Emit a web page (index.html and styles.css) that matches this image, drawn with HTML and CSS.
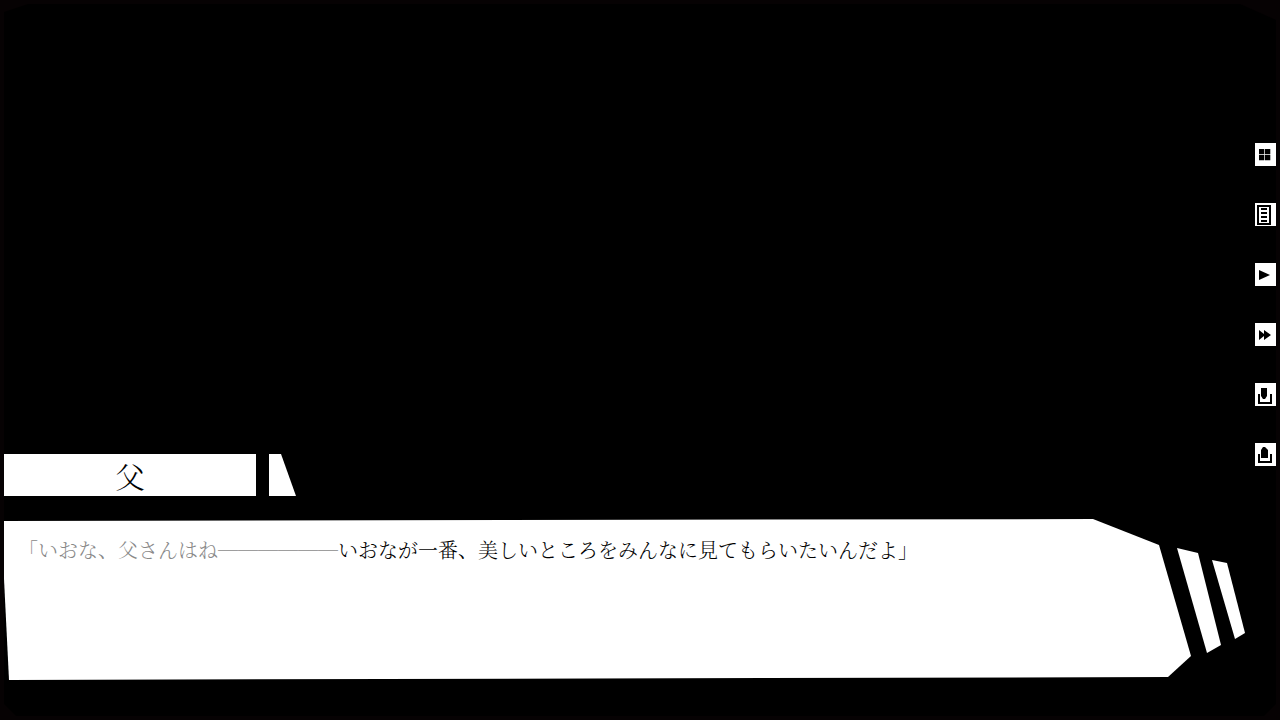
FILE: index.html
```
<!DOCTYPE html>
<html lang="ja">
<head>
    <meta charset="UTF-8">
    <meta name="viewport" content="width=device-width, initial-scale=1.0">
    <title>父</title>
    <link rel="stylesheet" href="styles.css">
</head>
<body>

    <div class="frame">
        <div class="screen">
            <main class="stage">
                <div class="speaker">
                    <h1 class="speaker-name">父</h1>
                    <div class="speaker-tab"></div>
                </div>

                <div class="dialog">
                    <div class="dialog-panel">
                        <p class="dialog-text"><span class="faded">「いおな、父さんはね──────</span>いおなが一番、美しいところをみんなに見てもらいたいんだよ」</p>
                    </div>
                    <svg class="dialog-stripes" viewBox="0 0 68 161" aria-hidden="true">
                        <polygon points="0,29 21,34 44,126 30,134"/>
                        <polygon points="35,41 50,44 68,114 58,120"/>
                    </svg>
                </div>
            </main>

            <nav class="menu">
                <button type="button" aria-label="メニュー">
                    <svg viewBox="0 0 21 23"><path d="M4 6h5.3v5.300H4zM10 6h5.300v5.300H10zM4 12h5.300v5.300H4zM10 12h5.300v5.300H10z"/></svg>
                </button>
                <button type="button" aria-label="ログ">
                    <svg viewBox="0 0 21 23"><path fill-rule="evenodd" d="M2 2h14v20H2zM4 4v16h10V4z"/><path d="M6 5h6v2H6zM6 9h6v2H6zM6 13h6v2H6zM6 17h6v2H6z"/></svg>
                </button>
                <button type="button" aria-label="オート">
                    <svg viewBox="0 0 21 23"><path d="M4 7l11 5-11 5z"/></svg>
                </button>
                <button type="button" aria-label="スキップ">
                    <svg viewBox="0 0 21 23"><path d="M4 7l5 4V7l7 5-7 5v-4l-5 4z"/></svg>
                </button>
                <button type="button" aria-label="セーブ">
                    <svg viewBox="0 0 21 23"><path d="M6 5h6v8l-2 3H8l-2-3z"/><path d="M3 11h2v8h10v-8h2v10H3z"/></svg>
                </button>
                <button type="button" aria-label="ロード">
                    <svg viewBox="0 0 21 23"><path d="M8 4h2l3 3v8H6V7z"/><path d="M3 11h2v7h10v-7h2v9H3z"/></svg>
                </button>
            </nav>
        </div>
    </div>

</body>
</html>
```
FILE: styles.css
```
* {
    box-sizing: border-box;
}
body {
    margin: 0;
    background-color: #060203;
    color: #000;
    font-family: "Noto Serif CJK JP", "Noto Sans CJK JP", sans-serif;
    font-weight: 300;
}
.frame {
    display: flex;
    min-height: 100vh;
    padding: 4px;
}
.screen {
    display: flex;
    flex: 1;
    gap: 10px;
    background-color: #000;
    clip-path: polygon(0 8px, 24px 0, calc(100% - 36px) 0, 100% 16px, 100% calc(100% - 12px), calc(100% - 12px) 100%, 12px 100%, 0 calc(100% - 12px));
}
.stage {
    display: flex;
    flex: 1;
    flex-direction: column;
    justify-content: flex-end;
    gap: 23px;
    padding-bottom: 36px;
}

/* 名前プレート */
.speaker {
    display: flex;
    gap: 13px;
}
.speaker-name {
    width: 252px;
    margin: 0;
    background-color: #fff;
    font-size: 30px;
    font-weight: 300;
    line-height: 42px;
    text-align: center;
}
.speaker-tab {
    width: 27px;
    background-color: #fff;
    clip-path: polygon(0 0, 12px 0, 100% 100%, 0 100%);
}

/* メッセージ枠 */
.dialog {
    display: flex;
}
.dialog-panel {
    flex: 1;
    min-height: 161px;
    padding: 16px 100px 24px 14px;
    background-color: #fff;
    clip-path: polygon(0 2px, calc(100% - 98px) 0, calc(100% - 32px) 26px, 100% 137px, calc(100% - 23px) calc(100% - 3px), 5px 100%, 0 60px);
}
.dialog-text {
    margin: 0;
    font-size: 20px;
    line-height: 30px;
}
.faded {
    color: #888;
}
.dialog-stripes {
    width: 68px;
    height: 161px;
    margin-left: -14px;
    fill: #fff;
}

/* 右側のボタン */
.menu {
    display: flex;
    flex-direction: column;
    gap: 37px;
    padding-top: 139px;
}
.menu button {
    width: 21px;
    height: 23px;
    padding: 0;
    border: none;
    background-color: #fff;
    cursor: pointer;
}
.menu button:hover {
    background-color: #ddd;
}
.menu svg {
    display: block;
    width: 21px;
    height: 23px;
}
```
